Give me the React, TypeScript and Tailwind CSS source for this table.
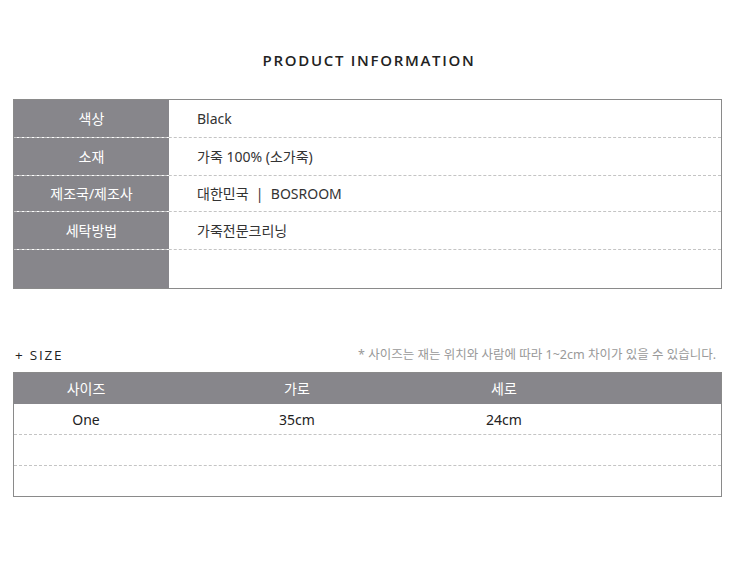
const info = [
  { label: '색상', value: 'Black', h: 'h-[38px]' },
  { label: '소재', value: '가죽 100% (소가죽)', h: 'h-[38px]' },
  { label: '제조국/제조사', value: '대한민국  |  BOSROOM', h: 'h-[36px]' },
  { label: '세탁방법', value: '가죽전문크리닝', h: 'h-[38px]' },
  { label: '', value: '', h: 'h-[38px]' },
];

const sizeRows = [
  { cells: ['One', '35cm', '24cm', ''], h: 'h-[31px]' },
  { cells: ['', '', '', ''], h: 'h-[31px]' },
  { cells: ['', '', '', ''], h: 'h-[30px]' },
];

const cols = 'grid grid-cols-[144px_278px_136px_1fr]';

export default function App() {
  return (
    <div
      className="w-[738px] h-[586px] bg-white text-[#333]"
      style={{ fontFamily: '"Noto Sans", "Noto Sans CJK KR", sans-serif' }}
    >
      {/* title */}
      <h2 className="pt-[50px] text-center text-[15px] leading-[20px] font-semibold tracking-[1.7px] text-[#222] font-['Open_Sans',sans-serif]">
        PRODUCT INFORMATION
      </h2>

      {/* info table */}
      <div className="mt-[29px] mx-[13px] w-[709px] border border-[#8a8a8a]">
        {info.map((row, i) => (
          <div
            key={i}
            className={`flex ${row.h} ${i < info.length - 1 ? 'border-b border-dashed border-[#c4c4c4]' : ''}`}
          >
            <div className="w-[155px] shrink-0 bg-[#87868b] flex items-center justify-center text-[14px] text-white">
              {row.label}
            </div>
            <div className="flex-1 flex items-center pl-[28px] text-[14px] text-[#333] whitespace-pre">
              {row.value}
            </div>
          </div>
        ))}
      </div>

      {/* size header */}
      <div className="mt-[57px] mx-[14px] flex items-end justify-between">
        <div className="pl-px text-[13.5px] leading-[18px] tracking-[1.8px] text-[#222] font-['Open_Sans',sans-serif]">
          + SIZE
        </div>
        <div className="pr-[8px] text-[12.5px] leading-[18px] text-[#999]">
          * 사이즈는 재는 위치와 사람에 따라 1~2cm 차이가 있을 수 있습니다.
        </div>
      </div>

      {/* size table */}
      <div className="mt-[8px] mx-[13px] w-[709px] border border-[#8a8a8a]">
        <div className={`${cols} h-[31px] bg-[#87868b] text-white text-[14px]`}>
          <div className="flex items-center justify-center">사이즈</div>
          <div className="flex items-center justify-center">가로</div>
          <div className="flex items-center justify-center">세로</div>
          <div />
        </div>
        {sizeRows.map((r, i) => (
          <div
            key={i}
            className={`${cols} ${r.h} text-[14px] text-[#222] ${i < sizeRows.length - 1 ? 'border-b border-dashed border-[#c4c4c4]' : ''}`}
          >
            {r.cells.map((c, j) => (
              <div key={j} className="flex items-center justify-center">
                {c}
              </div>
            ))}
          </div>
        ))}
      </div>
    </div>
  );
}
